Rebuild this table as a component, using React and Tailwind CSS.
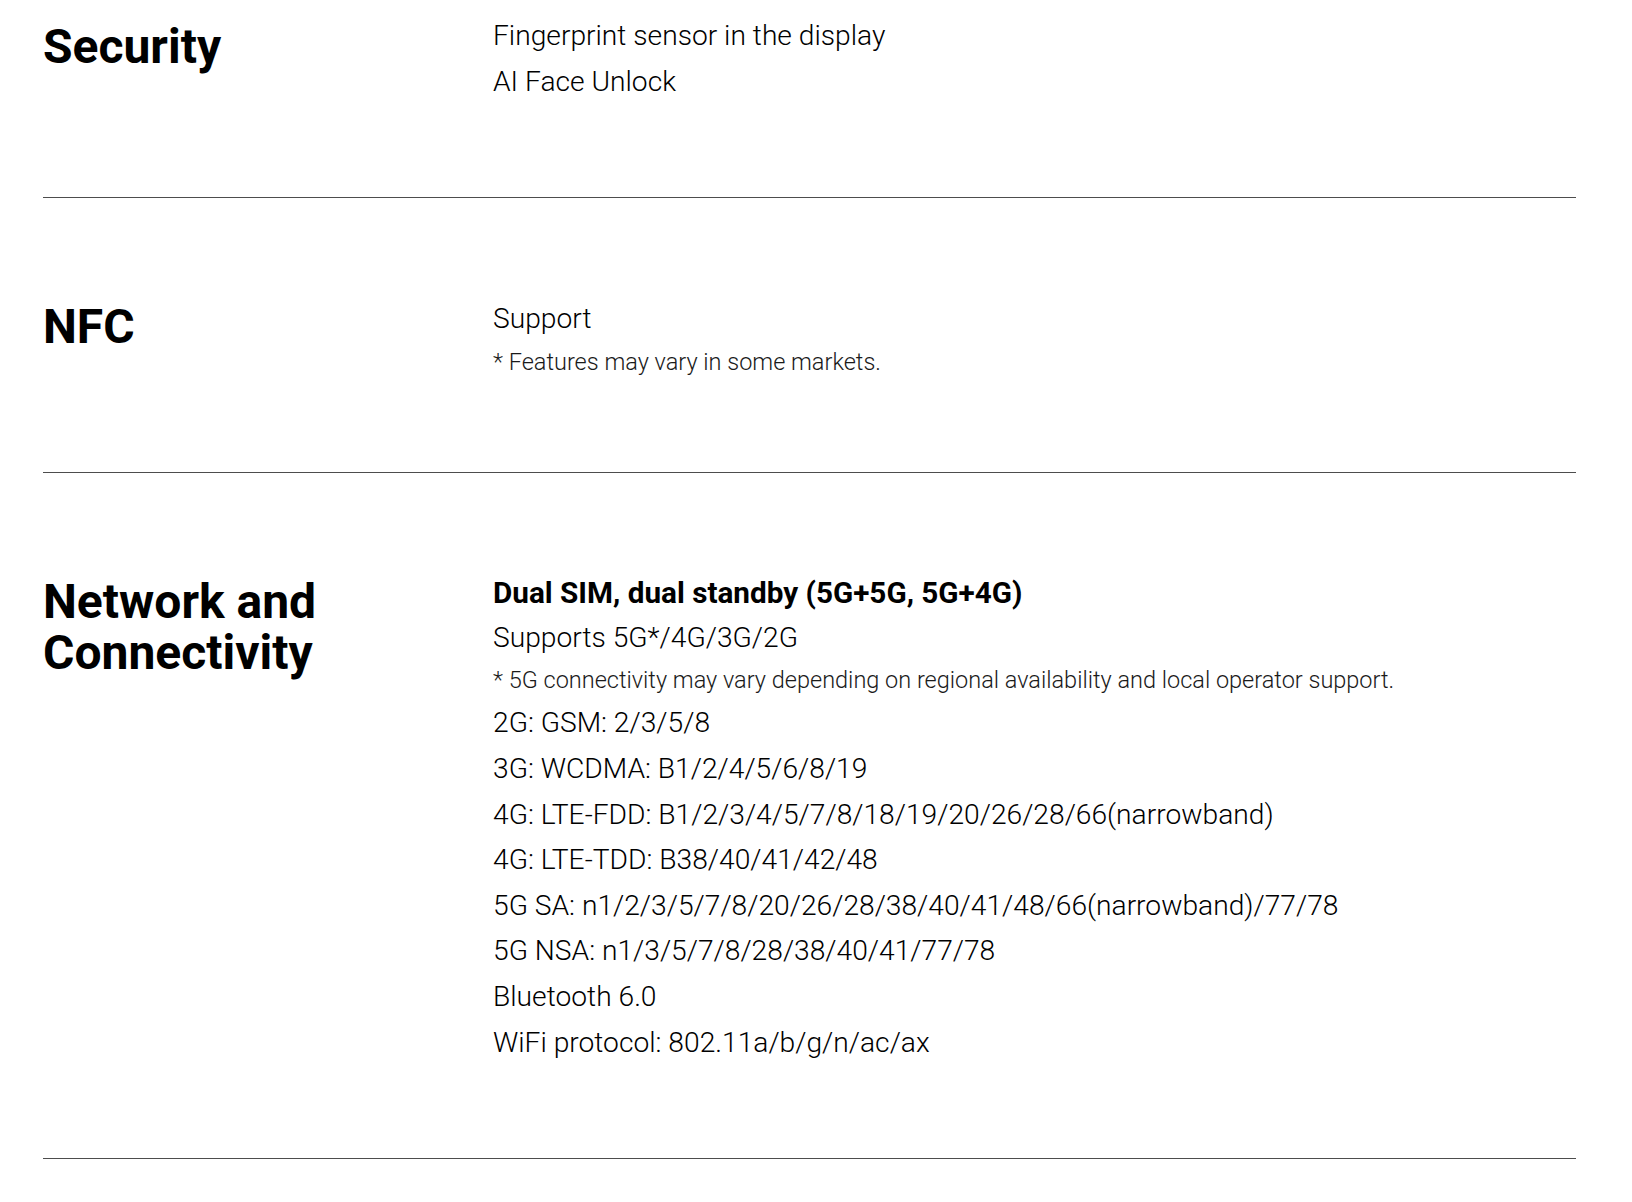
const sections = [
  {
    title: "Security",
    first: true,
    lines: [
      { text: "Fingerprint sensor in the display" },
      { text: "AI Face Unlock" },
    ],
  },
  {
    title: "NFC",
    lines: [
      { text: "Support" },
      { text: "* Features may vary in some markets.", note: true },
    ],
  },
  {
    title: "Network and Connectivity",
    last: true,
    lines: [
      { text: "Dual SIM, dual standby (5G+5G, 5G+4G)", strong: true },
      { text: "Supports 5G*/4G/3G/2G" },
      {
        text: "* 5G connectivity may vary depending on regional availability and local operator support.",
        note: true,
      },
      { text: "2G: GSM: 2/3/5/8" },
      { text: "3G: WCDMA: B1/2/4/5/6/8/19" },
      { text: "4G: LTE-FDD: B1/2/3/4/5/7/8/18/19/20/26/28/66(narrowband)" },
      { text: "4G: LTE-TDD: B38/40/41/42/48" },
      { text: "5G SA: n1/2/3/5/7/8/20/26/28/38/40/41/48/66(narrowband)/77/78" },
      { text: "5G NSA: n1/3/5/7/8/28/38/40/41/77/78" },
      { text: "Bluetooth 6.0" },
      { text: "WiFi protocol: 802.11a/b/g/n/ac/ax" },
    ],
  },
];

function SpecLine({ line }) {
  if (line.strong) {
    return (
      <p className="text-[29.7px] leading-[44px] font-bold text-black">
        {line.text}
      </p>
    );
  }
  if (line.note) {
    return (
      <p className="text-[23.5px] leading-[40px] font-light text-[#1a1a1a]">
        {line.text}
      </p>
    );
  }
  return (
    <p className="text-[28.2px] leading-[45.6px] font-light text-black">
      {line.text}
    </p>
  );
}

function SpecRow({ section }) {
  let pad = "pt-[98px] pb-[90px]";
  if (section.first) pad = "pt-[13px] pb-[93px]";
  if (section.last) pad = "pt-[98px] pb-[93px]";
  return (
    <div className={"grid grid-cols-[450px_1fr] border-b border-[#4d4d4d] " + pad}>
      <h2
        className={
          "max-w-[400px] text-[48px] leading-[51px] font-bold text-black " +
          (section.first ? "mt-[8px]" : "mt-[5px]")
        }
      >
        {section.title}
      </h2>
      <div className="flex flex-col">
        {section.lines.map((line) => (
          <SpecLine key={line.text} line={line} />
        ))}
      </div>
    </div>
  );
}

export default function App() {
  return (
    <div
      className="min-h-screen bg-white pl-[43px] pr-[56px]"
      style={{ fontFamily: "Roboto, 'Noto Sans', sans-serif" }}
    >
      {sections.map((s) => (
        <SpecRow key={s.title} section={s} />
      ))}
    </div>
  );
}
